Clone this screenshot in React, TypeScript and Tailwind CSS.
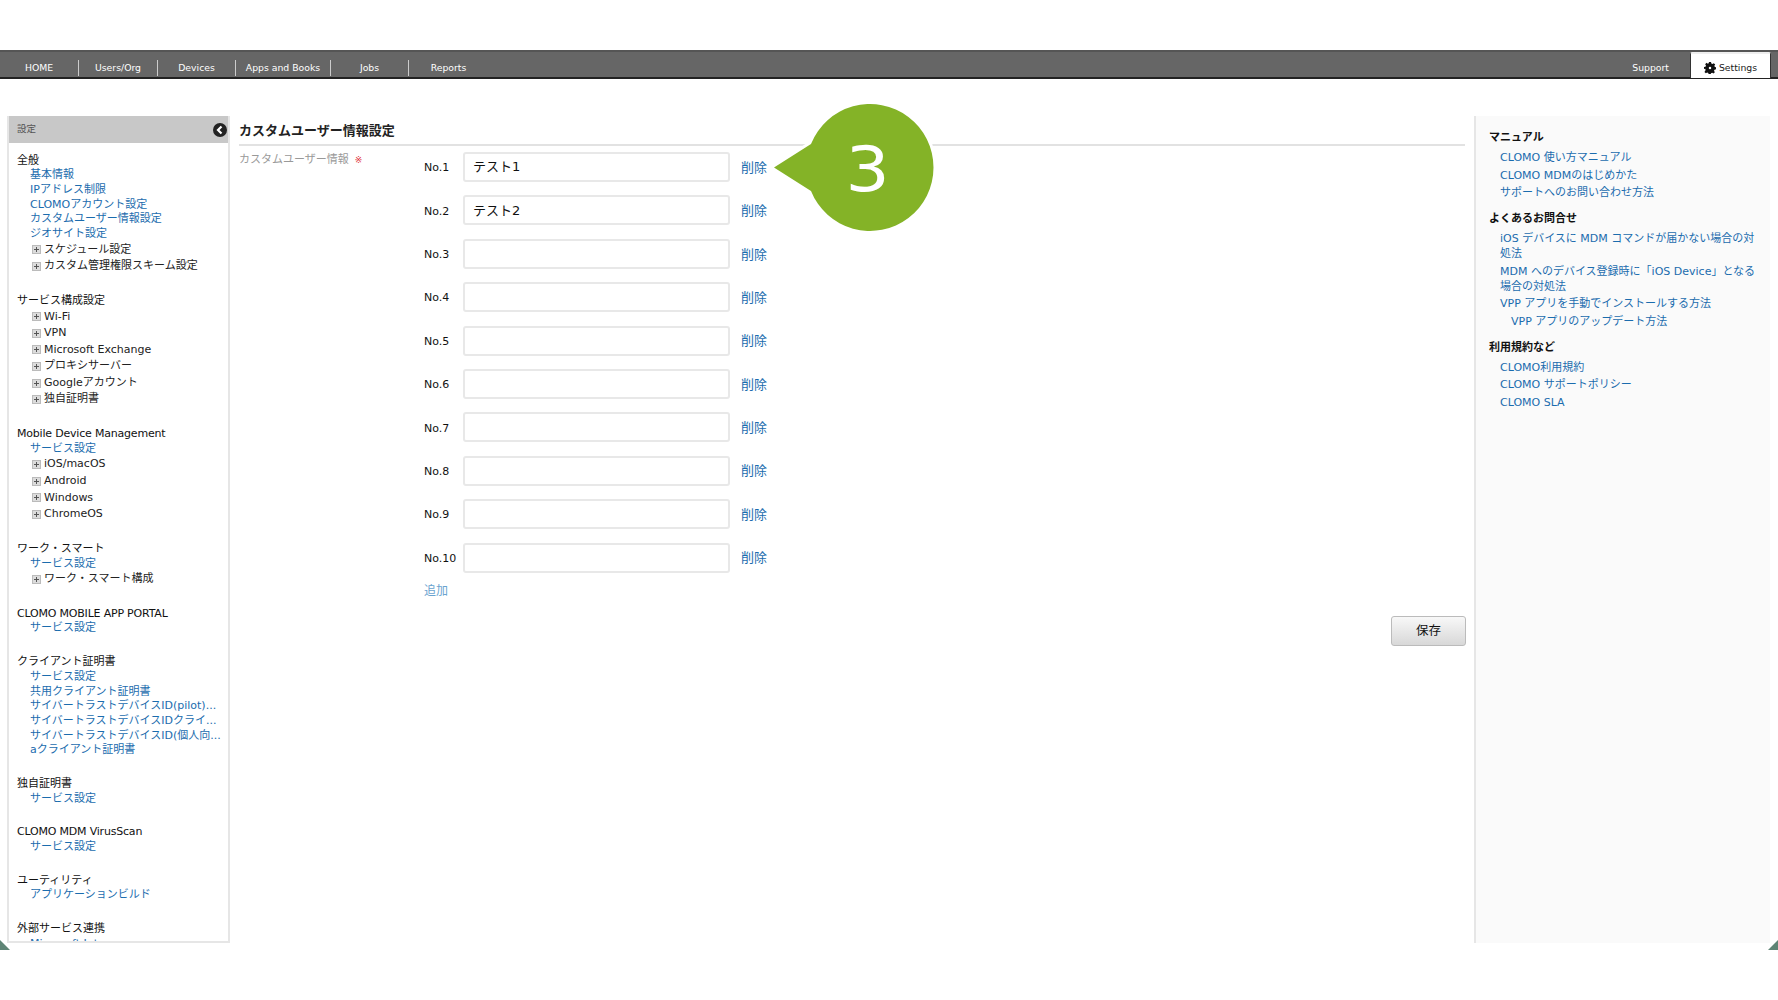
import React from "react";

const navItems = [
  { label: "HOME", width: "w-[79px]" },
  { label: "Users/Org", width: "w-[79px]" },
  { label: "Devices", width: "w-[78px]" },
  { label: "Apps and Books", width: "w-[95px]" },
  { label: "Jobs", width: "w-[78px]" },
  { label: "Reports", width: "w-[79px]" },
];

type Row = { type: "link" | "tree"; label: string };
type Group = { title: string; rows: Row[] };

const link = (label: string): Row => ({ type: "link", label });
const tree = (label: string): Row => ({ type: "tree", label });

const groups: Group[] = [
  {
    title: "全般",
    rows: [
      link("基本情報"),
      link("IPアドレス制限"),
      link("CLOMOアカウント設定"),
      link("カスタムユーザー情報設定"),
      link("ジオサイト設定"),
      tree("スケジュール設定"),
      tree("カスタム管理権限スキーム設定"),
    ],
  },
  {
    title: "サービス構成設定",
    rows: [
      tree("Wi-Fi"),
      tree("VPN"),
      tree("Microsoft Exchange"),
      tree("プロキシサーバー"),
      tree("Googleアカウント"),
      tree("独自証明書"),
    ],
  },
  {
    title: "Mobile Device Management",
    rows: [link("サービス設定"), tree("iOS/macOS"), tree("Android"), tree("Windows"), tree("ChromeOS")],
  },
  { title: "ワーク・スマート", rows: [link("サービス設定"), tree("ワーク・スマート構成")] },
  { title: "CLOMO MOBILE APP PORTAL", rows: [link("サービス設定")] },
  {
    title: "クライアント証明書",
    rows: [
      link("サービス設定"),
      link("共用クライアント証明書"),
      link("サイバートラストデバイスID(pilot)..."),
      link("サイバートラストデバイスIDクライ..."),
      link("サイバートラストデバイスID(個人向..."),
      link("aクライアント証明書"),
    ],
  },
  { title: "独自証明書", rows: [link("サービス設定")] },
  { title: "CLOMO MDM VirusScan", rows: [link("サービス設定")] },
  { title: "ユーティリティ", rows: [link("アプリケーションビルド")] },
  { title: "外部サービス連携", rows: [link("Microsoft Intune")] },
];

const helpSections = [
  {
    title: "マニュアル",
    links: [{ label: "CLOMO 使い方マニュアル" }, { label: "CLOMO MDMのはじめかた" }, { label: "サポートへのお問い合わせ方法" }],
  },
  {
    title: "よくあるお問合せ",
    links: [
      { label: "iOS デバイスに MDM コマンドが届かない場合の対処法" },
      { label: "MDM へのデバイス登録時に「iOS Device」となる場合の対処法" },
      { label: "VPP アプリを手動でインストールする方法" },
      { label: "VPP アプリのアップデート方法", sub: true },
    ],
  },
  {
    title: "利用規約など",
    links: [{ label: "CLOMO利用規約" }, { label: "CLOMO サポートポリシー" }, { label: "CLOMO SLA" }],
  },
];

const values = ["テスト1", "テスト2", "", "", "", "", "", "", "", ""];

function PlusBox() {
  return (
    <span className="mr-[3px] flex h-[9px] w-[9px] shrink-0 items-center justify-center border border-[#bbb] bg-[#dcdcdc]">
      <svg viewBox="0 0 7 7" className="h-[7px] w-[7px]">
        <path d="M3.500 1v5M1 3.500h5" stroke="#555" strokeWidth="1" fill="none" />
      </svg>
    </span>
  );
}

export default function App() {
  return (
    <div className="relative h-[1000px] w-[1778px] overflow-hidden bg-white pt-[50px] font-['DejaVu_Sans','Noto_Sans_CJK_JP',sans-serif] text-[11px] text-[#111]">
      {/* top nav */}
      <div className="flex h-[29px] items-stretch justify-between border-t-2 border-b-2 border-t-[#555] border-b-[#222] bg-[#666] pr-[7px] text-white">
        <div className="flex items-center pt-[6px] text-[9.300px]">
          {navItems.map((item, i) => (
            <div
              key={item.label}
              className={`flex h-[16px] items-center justify-center ${i < 5 ? "border-r border-r-[#ccc]" : ""} ${item.width}`}
            >
              {item.label}
            </div>
          ))}
        </div>
        <div className="flex items-stretch text-[9.300px]">
          <div className="flex items-center pt-[6px] pr-[21px]">Support</div>
          <div className="-mb-[1px] flex w-[81px] items-center justify-center gap-[3px] rounded-t-[2px] border-x border-t-2 border-x-[#333] border-t-[#eee] bg-white pt-[3px] text-[#222]">
            <svg viewBox="0 0 24 24" className="h-[12px] w-[12px]">
              <path
                fill="#111"
                fillRule="evenodd"
                d="M10 0h4l.7 3 2.300 1 2.600-1.700 2.800 2.800L20.700 7.700l1 2.300 2.300.7v4l-3 .7-1 2.300 1.700 2.600-2.800 2.800-2.600-1.700-2.300 1-.7 2.600h-4l-.7-3-2.300-1-2.600 1.700-2.800-2.800L3.300 16l-1-2.300L0 14v-4l3-.7 1-2.300-1.700-2.600 2.800-2.800L7.700 3.300l1.700-.7zM12 9.500a2.500 2.500 0 1 0 0 5 2.500 2.500 0 0 0 0-5z"
              />
            </svg>
            Settings
          </div>
        </div>
      </div>

      <div className="mt-[37px] flex h-[827px] items-stretch">
        {/* left sidebar */}
        <aside className="ml-[7px] flex w-[223px] shrink-0 flex-col overflow-hidden border-x-2 border-b-2 border-[#e6e6e6]">
          <div className="-mx-[2px] flex h-[27px] shrink-0 items-center justify-between bg-[#c8c8c8] pr-[3px] pl-[10px] text-[9.500px] text-[#555]">
            設定
            <svg viewBox="0 0 14 14" className="h-[14px] w-[14px]">
              <circle cx="7" cy="7" r="7" fill="#222" />
              <path d="M8.500 3.500 5 7l3.500 3.500" stroke="#fff" strokeWidth="2.200" fill="none" />
            </svg>
          </div>
          <div className="overflow-hidden pt-[10.500px] pl-[8px]">
            {groups.map((g) => (
              <div key={g.title} className="mb-[19px]">
                <div
                  className={`h-[14.700px] whitespace-nowrap leading-[14.700px] ${
                    /^[A-Za-z]/.test(g.title) ? "tracking-[-0.2px]" : ""
                  }`}
                >
                  {g.title}
                </div>
                {g.rows.map((r) =>
                  r.type === "link" ? (
                    <a key={r.label} className="block h-[14.700px] whitespace-nowrap pl-[13px] leading-[14.700px] text-[#1b6cae]">
                      {r.label}
                    </a>
                  ) : (
                    <div key={r.label} className="flex h-[16.600px] items-center whitespace-nowrap pl-[15px] leading-[16.600px] text-[#222]">
                      <PlusBox />
                      {r.label}
                    </div>
                  )
                )}
              </div>
            ))}
          </div>
        </aside>

        {/* main form */}
        <main className="ml-[9px] flex w-[1226px] shrink-0 flex-col">
          <h1 className="h-[30px] border-b-2 border-b-[#e2e2e2] pt-[6px] text-[13px] leading-[18px] font-bold text-[#222]">
            カスタムユーザー情報設定
          </h1>
          <div className="flex">
            <div className="flex w-[185px] shrink-0 items-start gap-[6px] pt-[7px] text-[11px] leading-[14px] text-[#999]">
              カスタムユーザー情報
              <span className="text-[9px] text-[#e0303a]">※</span>
            </div>
            <div className="flex flex-col pt-[6px]">
              {values.map((v, i) => (
                <div key={i} className="mb-[13.400px] flex h-[30px] items-center">
                  <span className="w-[39px] shrink-0 pt-[3px] text-[11px]">No.{i + 1}</span>
                  <div className="flex h-[30px] w-[267px] items-center rounded-[3px] border-2 border-[#e8e8e8] bg-white pl-[8px] text-[13px]">
                    {v}
                  </div>
                  <a className="ml-[11px] pt-[1px] text-[13px] text-[#1b6cae]">削除</a>
                </div>
              ))}
              <a className="-mt-[3px] text-[12px] leading-[16px] text-[#6aa3cf]">追加</a>
            </div>
          </div>
          <div className="mt-[17px] flex justify-end">
            <button className="-mr-[1px] h-[30px] w-[75px] rounded-[3px] border border-[#bbb] bg-gradient-to-b from-[#f8f8f8] to-[#d8d8d8] text-[12.500px] text-[#111]">
              保存
            </button>
          </div>
        </main>

        {/* help panel */}
        <aside className="ml-[9px] w-[296px] shrink-0 border-l-2 border-l-[#e6e6e6] bg-[#fafafa] pt-[13px] pr-[10px] pl-[13px]">
          {helpSections.map((s) => (
            <div key={s.title} className="mb-[10px]">
              <div className="mb-[3px] text-[11px] leading-[18px] font-bold text-[#111]">{s.title}</div>
              {s.links.map((l) => (
                <a
                  key={l.label}
                  className={`mb-[2.500px] block text-[11px] leading-[15px] text-[#1b6cae] ${"sub" in l ? "pl-[22px]" : "pl-[11px]"}`}
                >
                  {l.label}
                </a>
              ))}
            </div>
          ))}
        </aside>
      </div>

      {/* window corners */}
      <div className="absolute top-[940px] left-0 h-[10px] w-[10px] bg-[#5e8475] [clip-path:polygon(0_0,100%_100%,0_100%)]" />
      <div className="absolute top-[940px] right-0 h-[10px] w-[10px] bg-[#5e8475] [clip-path:polygon(100%_0,100%_100%,0_100%)]" />

      {/* step callout */}
      <div className="absolute top-[104px] left-[774px] h-[127px] w-[158px]">
        <svg viewBox="0 0 158 127" className="absolute inset-0 h-full w-full overflow-visible">
          <path
            d="M0 63.500 L37 40 A63.500 63.500 0 1 1 37 87 Z"
            fill="#84b327"
            stroke="#fff"
            strokeWidth="6"
            paintOrder="stroke"
          />
        </svg>
        <span className="absolute top-[2px] left-[30px] flex h-[127px] w-[127px] scale-x-[1.12] items-center justify-center font-['DejaVu_Sans',sans-serif] text-[62px] text-white">
          3
        </span>
      </div>
    </div>
  );
}
